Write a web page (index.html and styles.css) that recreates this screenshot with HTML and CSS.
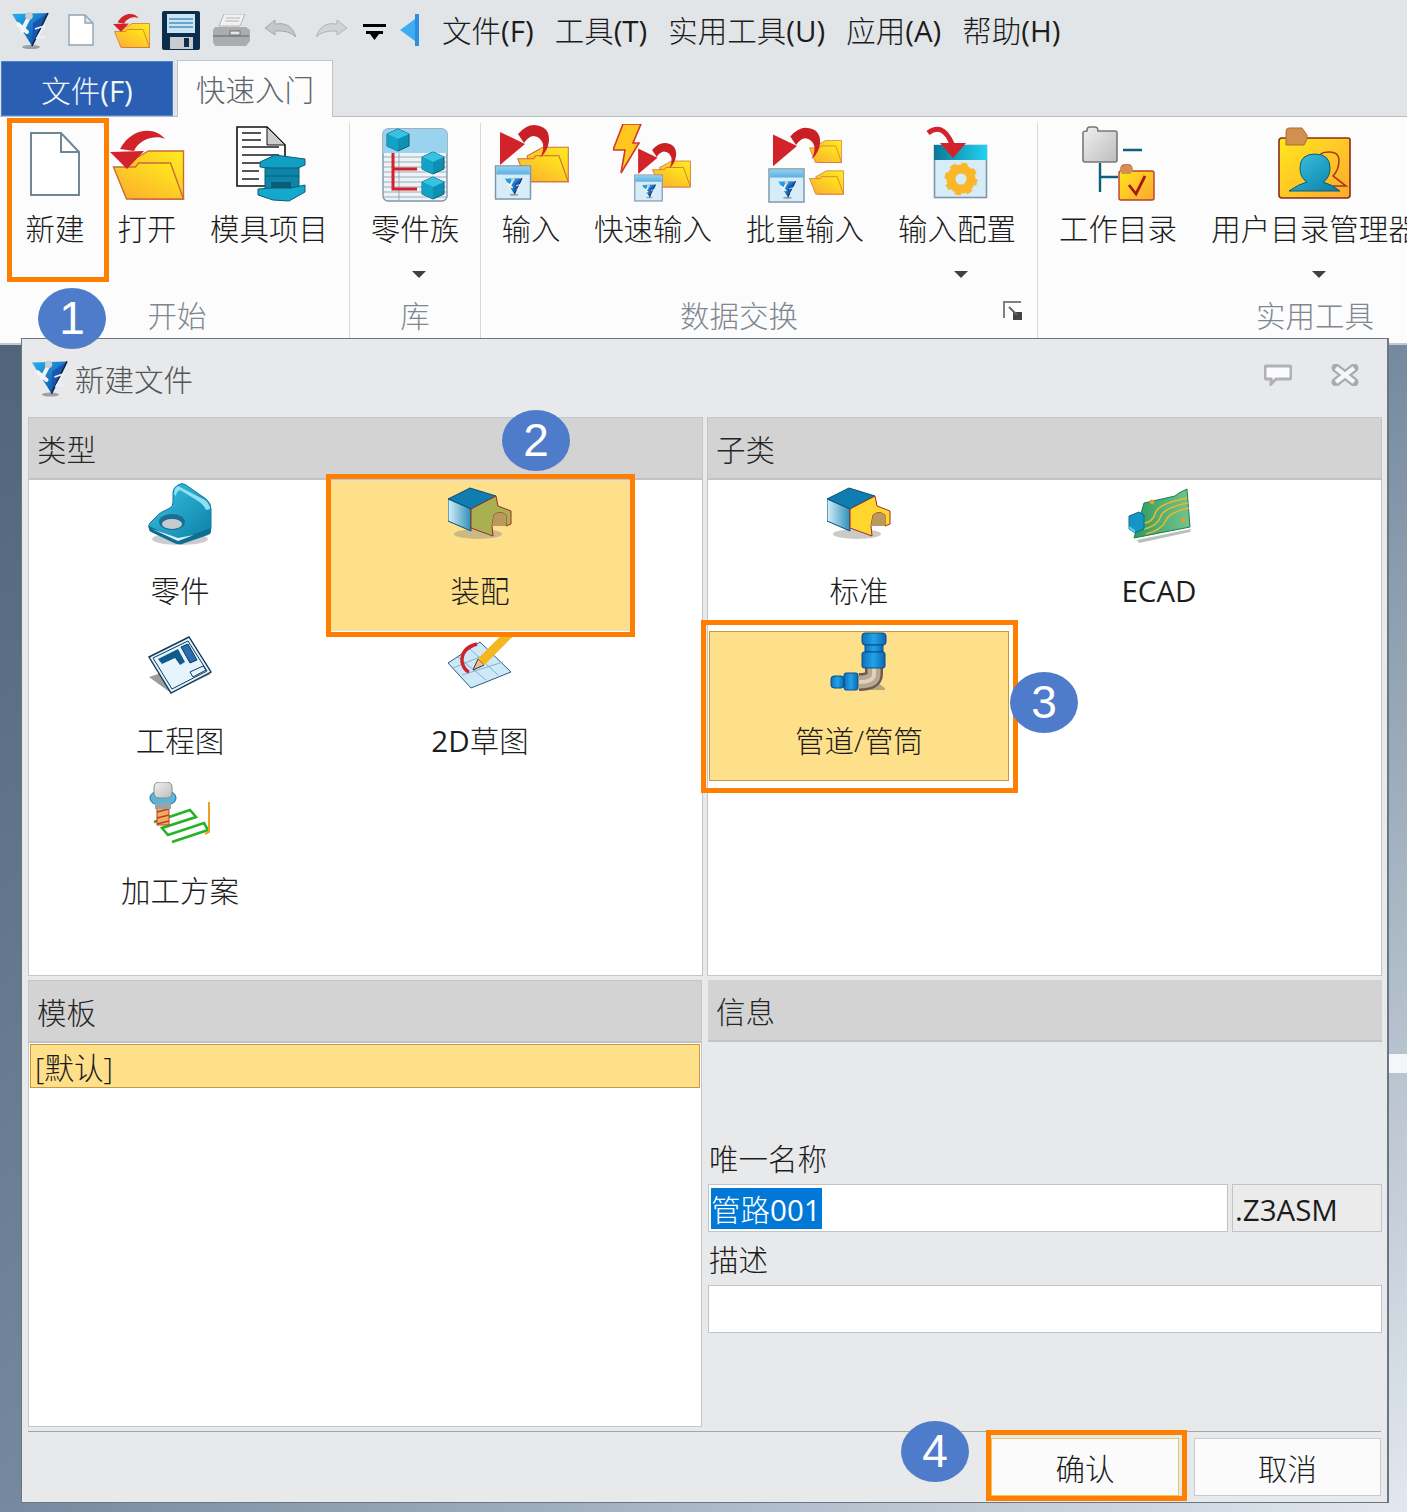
FILE: index.html
```html
<!DOCTYPE html>
<html lang="zh-CN">
<head>
	<meta charset="UTF-8"/>
	<title>新建文件</title>
	<link rel="stylesheet" href="styles.css">
</head>
<body>
<div class="page">
	<!-- Shared gradients and icon parts -->
	<svg class="defs" width="0" height="0">
		<defs>
			<linearGradient id="gYellow" x1="0" y1="1" x2="1" y2="0"><stop offset="0" stop-color="#fba92f"/><stop offset="1" stop-color="#ffee1c"/></linearGradient>
			<linearGradient id="gYellow2" x1="0" y1="0" x2="1" y2="1"><stop offset="0" stop-color="#ffe81c"/><stop offset="1" stop-color="#fba92f"/></linearGradient>
			<linearGradient id="gBlue" x1="0" y1="0" x2="1" y2="1"><stop offset="0" stop-color="#27b4ee"/><stop offset="1" stop-color="#0b3f9c"/></linearGradient>
			<linearGradient id="gTeal" x1="0" y1="0" x2="1" y2="1"><stop offset="0" stop-color="#3cc4e4"/><stop offset="1" stop-color="#0a7ea6"/></linearGradient>
			<linearGradient id="gFace" x1="0" y1="0" x2="1" y2="0"><stop offset="0" stop-color="#d4f0fa"/><stop offset="1" stop-color="#2f8fb8"/></linearGradient>
			<linearGradient id="gTitle" x1="0" y1="0" x2="1" y2="0"><stop offset="0" stop-color="#0b7896"/><stop offset="1" stop-color="#22d2f2"/></linearGradient>
			<linearGradient id="gWin" x1="0" y1="0" x2="0" y2="1"><stop offset="0" stop-color="#8fd0f2"/><stop offset="1" stop-color="#5fafe0"/></linearGradient>
			<linearGradient id="gGrey" x1="0" y1="0" x2="1" y2="1"><stop offset="0" stop-color="#f0f0f0"/><stop offset="1" stop-color="#bdbdbd"/></linearGradient>
			<linearGradient id="gPipe" x1="0" y1="0" x2="1" y2="0"><stop offset="0" stop-color="#0f6fc0"/><stop offset=".5" stop-color="#22a4e4"/><stop offset="1" stop-color="#0c66b4"/></linearGradient>
			<linearGradient id="gPcb" x1="0" y1="0" x2="1" y2="0"><stop offset="0" stop-color="#2d9c62"/><stop offset="1" stop-color="#74c48e"/></linearGradient>
		</defs>
		<symbol id="logo" viewBox="0 0 38 38">
			<ellipse cx="20" cy="36" rx="9" ry="2" fill="#9aa0a6"/>
			<polygon points="1,3 37,2 21,35" fill="url(#gBlue)"/>
			<polygon points="22,12 37,2 21,35" fill="#1a55b0"/>
			<path d="M37 2L21 35" stroke="#0e2240" stroke-width="1.6"/>
			<path d="M18 6L11 20M7 13L16 21" stroke="#f2f4f6" stroke-width="4" fill="none" stroke-linecap="round"/>
			<circle cx="18" cy="5" r="3.8" fill="#c8ced4"/>
			<path d="M24 18L33 15L26 27L34 26" stroke="#e8f4fc" stroke-width="1.8" fill="none"/>
		</symbol>
		<symbol id="folder" viewBox="0 0 72 50">
			<path d="M14 13 L29 5 L36 1 H71 V49 H20Z" fill="url(#gYellow)" stroke="#c96a3c" stroke-width="1.4"/>
			<path d="M1 17 H23 L26 13 H58 L71 49 H14Z" fill="url(#gYellow)" stroke="#c96a3c" stroke-width="1.4"/>
		</symbol>
		<symbol id="arrow" viewBox="0 0 56 42">
			<path d="M55 10C47-1 23-4 10 20L24 22C30 9 47 6 55 10Z M0 23L34 22L17 40Z" fill="#d2232a"/>
		</symbol>
		<symbol id="curl" viewBox="0 0 50 40">
			<path d="M0 7V40L25 19Z" fill="#d2232a"/>
			<path d="M18 9Q26 0 34 0Q50 1 49 16Q48 26 40 33Q44 26 43 19Q40 11 33 11Q28 12 24 18Z" fill="#c92026"/>
		</symbol>
		<symbol id="win" viewBox="0 0 38 36">
			<rect x="1" y="1" width="36" height="34" fill="#d6ecf9" stroke="#7d97aa" stroke-width="1.5"/>
			<rect x="1.8" y="1.8" width="34.4" height="8" fill="url(#gWin)"/>
			<use href="#logo" x="10" y="12" width="19" height="20"/>
		</symbol>
		<symbol id="cube" viewBox="0 0 24 24">
			<polygon points="12,1 23,6 23,18 12,23 1,18 1,6" fill="#0d90b4" stroke="#0a5c78" stroke-width="1"/>
			<polygon points="12,1 23,6 12,11 1,6" fill="#38c2e2"/>
			<polygon points="1,6 12,11 12,23 1,18" fill="#12a2c8"/>
		</symbol>
		<symbol id="block" viewBox="0 0 64 64">
			<ellipse cx="30" cy="52" rx="24" ry="5" fill="#8a8a80" opacity=".45"/>
			<polygon points="0,17 22,6 48,14 23,27" fill="#0f7db0" stroke="#0b4f78"/>
			<polygon points="0,17 23,27 23,49 0,39" fill="url(#gFace)" stroke="#0b4f78"/>
			<path d="M23 27 L48 14 L50 24 L63 29 V42 L58 44 V33 Q52 28 46 33 L44 44 L45 54 L23 46Z" fill="currentColor" stroke="#a02a2a" stroke-width="1"/>
			<path d="M46 33 Q52 28 58 33 V44 L44 44Z" fill="#b79a5c"/>
		</symbol>
	</svg>

	<!-- Quick access bar -->
	<div class="quick">
		<svg width="38" height="38"><use href="#logo"/></svg>
		<svg width="26" height="32" viewBox="0 0 26 32"><path d="M1 1H17L25 9V31H1Z M17 1V9H25" fill="#fff" stroke="#8fa5b4" stroke-width="1.4"/></svg>
		<svg width="37" height="35" viewBox="0 0 74 70"><use href="#folder" x="2" y="20" width="72" height="50"/><use href="#arrow" x="0" y="0" width="52" height="40"/></svg>
		<svg width="38" height="39" viewBox="0 0 38 39">
			<rect x="0" y="0" width="38" height="39" rx="2" fill="#0b2e4c"/>
			<rect x="5" y="3" width="28" height="19" fill="#c9e4f4"/>
			<path d="M7 8H31M7 12H31M7 16H31" stroke="#4d90b8" stroke-width="1.4"/>
			<rect x="8" y="26" width="23" height="12" fill="#c8ccd0"/>
			<rect x="22" y="27" width="5" height="9" fill="#0b2e4c"/>
		</svg>
		<svg width="37" height="32" viewBox="0 0 37 32">
			<polygon points="11,0 32,0 27,12 6,12" fill="#f1f1f1" stroke="#b5b5b5"/>
			<path d="M13 4H27M12 7H26" stroke="#b5b5b5"/>
			<path d="M2 13H33L37 16V27L33 32H2L0 28V16Z" fill="#a9adb0"/>
			<path d="M0 22H36" stroke="#797d80" stroke-width="1.4"/>
			<rect x="17" y="17" width="10" height="4" fill="#e5e5e5" stroke="#6f7375"/>
		</svg>
		<svg width="31" height="17" viewBox="0 0 31 17"><path d="M0 8L10 0V4Q26 1 31 17Q24 10 10 11V15Z" fill="#c4c8ca" stroke="#a4a8aa"/></svg>
		<svg width="31" height="17" viewBox="0 0 31 17"><path d="M31 8L21 0V4Q5 1 0 17Q7 10 21 11V15Z" fill="#d0d4d6" stroke="#b0b4b6"/></svg>
		<svg width="23" height="16" viewBox="0 0 23 16"><path d="M0 0H23V3H0Z M3 7H20V10H16L11.5 16L7 10H3Z" fill="#000"/></svg>
		<svg width="20" height="32" viewBox="0 0 20 32"><polygon points="0,16 15,5 15,27" fill="#3fabf2"/><rect x="15" y="0" width="4" height="32" fill="#2c8ee0"/></svg>
		<nav class="menu">
			<span>文件<i class="lat">(F)</i></span>
			<span>工具<i class="lat">(T)</i></span>
			<span>实用工具<i class="lat">(U)</i></span>
			<span>应用<i class="lat">(A)</i></span>
			<span>帮助<i class="lat">(H)</i></span>
		</nav>
	</div>

	<!-- Ribbon tabs -->
	<div class="tabs">
		<div class="tab tab-file">文件<i class="lat">(F)</i></div>
		<div class="tab tab-on">快速入门</div>
	</div>

	<!-- Ribbon -->
	<div class="ribbon">
		<section class="group g-start">
			<div class="btns">
				<div class="rb w92">
					<svg class="ic" viewBox="0 0 80 80"><path d="M16 9H46L64 28V71H16Z" fill="#fff" stroke="#6f8794" stroke-width="2"/><path d="M46 9V28H64" fill="none" stroke="#6f8794" stroke-width="2"/></svg>
					<span>新建</span>
				</div>
				<div class="rb w92">
					<svg class="ic" viewBox="0 0 80 80"><use href="#folder" x="5" y="26" width="73" height="50"/><use href="#arrow" x="3" y="5" width="56" height="42"/></svg>
					<span>打开</span>
				</div>
				<div class="rb w152">
					<svg class="ic" viewBox="0 0 80 80">
						<path d="M8 3H38L56 21V62H8Z" fill="#fff" stroke="#111" stroke-width="1.6"/>
						<path d="M38 3V21H56Z" fill="#ccc" stroke="#111"/>
						<path d="M13 9H32M13 16H32M13 23H50M13 31H50M13 39H34M13 47H30M13 55H30" stroke="#555" stroke-width="2"/>
						<polygon points="31,38 46,31 76,35 76,41 62,47 31,43" fill="#10a0c4" stroke="#0a5c78"/>
						<polygon points="36,44 70,44 70,66 36,66" fill="#0c85a8" stroke="#0a5c78"/>
						<polygon points="42,58 62,58 62,64 42,64" fill="#0a5c78"/>
						<polygon points="29,65 42,64 62,64 76,61 76,68 60,77 44,76 29,71" fill="#13a8cc" stroke="#0a5c78"/>
						<path d="M36 52H70" stroke="#0a5c78"/>
					</svg>
					<span>模具项目</span>
				</div>
			</div>
			<div class="group-label">开始</div>
		</section>
		<section class="group g-lib">
			<div class="btns">
				<div class="rb wfull">
					<svg class="ic" viewBox="0 0 80 80">
						<rect x="8" y="5" width="64" height="72" rx="5" fill="#eef3f6" stroke="#7d97aa" stroke-width="1.4"/>
						<path d="M13 5H67Q72 5 72 10V29H8V10Q8 5 13 5Z" fill="#9bd3ef"/>
						<path d="M8 33H72M8 38H72M8 43H72M8 48H72M8 53H72M8 58H72M8 63H72M8 68H72M8 73H72M24 29V77" stroke="#8ea4b4" stroke-width=".9"/>
						<path d="M18 29V65H42M18 45H42" fill="none" stroke="#d8202c" stroke-width="3"/>
						<use href="#cube" x="11" y="4" width="24" height="24"/>
						<use href="#cube" x="46" y="27" width="24" height="24"/>
						<use href="#cube" x="46" y="52" width="24" height="24"/>
					</svg>
					<span>零件族</span>
					<i class="caret"></i>
				</div>
			</div>
			<div class="group-label">库</div>
		</section>
		<section class="group g-data">
			<div class="btns">
				<div class="rb w100">
					<svg class="ic" viewBox="0 0 80 80">
						<use href="#folder" x="26" y="18" width="52" height="45"/>
						<use href="#curl" x="9" y="1" width="50" height="40"/>
						<use href="#win" x="3" y="41" width="38" height="35"/>
					</svg>
					<span>输入</span>
				</div>
				<div class="rb w144">
					<svg class="ic" viewBox="0 0 80 80">
						<polygon points="10,0 28,0 20,19 26,19 8,49 12,26 0,26" fill="#ffc81e" stroke="#d3382a" stroke-width="1.6"/>
						<use href="#folder" x="39" y="33" width="39" height="34"/>
						<use href="#curl" x="25" y="19" width="39" height="31"/>
						<use href="#win" x="21" y="50" width="29" height="28"/>
					</svg>
					<span>快速输入</span>
				</div>
				<div class="rb w160">
					<svg class="ic" viewBox="0 0 80 80">
						<use href="#folder" x="44" y="13" width="33" height="29"/>
						<use href="#folder" x="44" y="44" width="35" height="29"/>
						<use href="#curl" x="8" y="3" width="48" height="40"/>
						<use href="#win" x="3" y="44" width="37" height="35"/>
					</svg>
					<span>批量输入</span>
				</div>
				<div class="rb w144">
					<svg class="ic" viewBox="0 0 80 80">
						<rect x="17.5" y="21.5" width="52" height="52" fill="#d6ecf9" stroke="#7d97aa" stroke-width="1.6"/>
						<rect x="17" y="21" width="53" height="15" fill="url(#gTitle)"/>
						<path d="M11 9Q26-2 35 20" fill="none" stroke="#d2232a" stroke-width="5"/>
						<polygon points="23,19 49,19 36,34" fill="#d2232a"/>
						<circle cx="44" cy="55" r="10" fill="none" stroke="#fbb72a" stroke-width="9"/>
						<circle cx="44" cy="55" r="14.5" fill="none" stroke="#fbb72a" stroke-width="4" stroke-dasharray="6 5.4"/>
					</svg>
					<span>输入配置</span>
					<i class="caret"></i>
				</div>
			</div>
			<div class="group-label">数据交换</div>
			<svg class="launcher" width="20" height="20" viewBox="0 0 20 20"><path d="M1 17V1H18" fill="none" stroke="#808080" stroke-width="2"/><rect x="10" y="11" width="9" height="8" fill="#444"/><path d="M6 6L14 14" stroke="#666" stroke-width="2"/></svg>
		</section>
		<section class="group g-util">
			<div class="btns">
				<div class="rb w160">
					<svg class="ic" viewBox="0 0 80 80">
						<path d="M5 9Q5 7 9 7V6Q9 3 12 3H17Q20 3 20 7H37Q39 7 39 9V36Q39 38 37 38H7Q5 38 5 36Z" fill="url(#gGrey)" stroke="#777" stroke-width="1.6"/>
						<path d="M45 26H64M22 39V68M22 53H40" stroke="#0f5f80" stroke-width="2.4" fill="none"/>
						<path d="M41 49Q41 47 43 47V45Q43 41 47 41H51Q54 41 54 47H74Q76 47 76 49V74Q76 76 74 76H43Q41 76 41 74Z" fill="url(#gYellow2)" stroke="#b8402c" stroke-width="1.4"/>
						<path d="M42 47Q42 41 47 41H51Q55 41 55 47L52 50H44Z" fill="#d09050"/>
						<path d="M51 61L58 70L67 52" fill="none" stroke="#a81818" stroke-width="2.8"/>
					</svg>
					<span>工作目录</span>
				</div>
				<div class="rb w233">
					<svg class="ic" viewBox="0 0 80 80">
						<path d="M4 17Q4 14 7 14H73Q75 14 75 16V71Q75 74 72 74H7Q4 74 4 71Z" fill="url(#gYellow2)" stroke="#8c2a18" stroke-width="1.6"/>
						<path d="M11 8Q11 4 14 4H27L32 11V15L29 21H11Z" fill="#d09050" stroke="#b06a30"/>
						<path d="M44 48V34Q44 28 54 28Q64 28 64 36Q64 46 58 52L71 62H46Z" fill="none" stroke="#a83a20" stroke-width="1.6"/>
						<path d="M40 30Q55 30 55 44Q55 54 48 58Q56 60 65 67H14Q24 60 32 58Q25 54 25 44Q25 30 40 30Z" fill="url(#gTeal)" stroke="#0a5c78"/>
					</svg>
					<span>用户目录管理器</span>
					<i class="caret"></i>
				</div>
			</div>
			<div class="group-label">实用工具</div>
		</section>
	</div>

	<i class="desk-strip"></i>

	<!-- New file dialog -->
	<div class="dialog">
		<div class="dlg-title">
			<svg width="37" height="38"><use href="#logo"/></svg>
			<span class="dlg-name">新建文件</span>
			<svg class="dlg-chat" width="28" height="22" viewBox="0 0 28 22"><path d="M3 2H25Q27 2 27 4V13Q27 15 25 15H12L7 20V15H3Q1 15 1 13V4Q1 2 3 2Z" fill="#fbfbfb" stroke="#aeb2b6" stroke-width="3"/></svg>
			<svg class="dlg-close" width="28" height="22" viewBox="0 0 28 22"><path d="M5 4L23 18M23 4L5 18" stroke="#a8acb0" stroke-width="9" stroke-linecap="round"/><path d="M5 4L23 18M23 4L5 18" stroke="#f6f6f6" stroke-width="4.5"/></svg>
		</div>
		<div class="panels">
			<section class="panel">
				<h2>类型</h2>
				<div class="items">
					<div class="item">
						<svg class="big" viewBox="0 0 64 64">
							<ellipse cx="32" cy="57" rx="28" ry="6" fill="#9a9a9a" opacity=".5"/>
							<path d="M30 3Q34 0 38 3L58 17Q63 21 63 27V46Q63 49 60 50L34 60Q30 61 26 59L3 48Q-1 45 2 41L8 35Q10 32 14 30L22 26Q25 24 25 20V10Q25 6 30 3Z" fill="url(#gTeal)" stroke="#0b7ea4"/>
							<path d="M30 4L57 18Q62 22 62 27L58 28Q56 23 50 19L32 8Q28 10 28 14L26 12Q26 6 30 4Z" fill="#8fe0f4"/>
							<path d="M1 44L30 58L63 46V50Q63 52 60 53L34 62Q30 63 26 61L3 50Q0 48 1 44Z" fill="#0e6f94"/>
							<path d="M4 47L30 59L46 53L30 56Z" fill="#d8f4fb"/>
							<ellipse cx="24" cy="40" rx="13" ry="8" fill="#1b6d92"/>
							<ellipse cx="24" cy="42" rx="10" ry="5" fill="#c4ccd0"/>
						</svg>
						<span>零件</span>
					</div>
					<div class="item on">
						<svg class="big olive"><use href="#block"/></svg>
						<span>装配</span>
					</div>
					<div class="item">
						<svg class="big" viewBox="0 0 64 64">
							<polygon points="1,45 23,61 63,42 40,32" fill="#9c9c9c"/>
							<polygon points="1,25 41,5 63,40 23,61" fill="#e6f5fd" stroke="#0e3a5c" stroke-width="1.4"/>
							<polygon points="5,26 40,9 59,39 24,57" fill="none" stroke="#0e3a5c"/>
							<path d="M10 27L30 17L37 30L32 33L27 26L14 32Z" fill="#115b8c"/>
							<polygon points="33,15 40,12 49,28 42,31" fill="#2a6cb0" stroke="#0e3a5c"/>
							<polygon points="42,40 55,34 58,38 45,45" fill="none" stroke="#0e3a5c"/>
						</svg>
						<span>工程图</span>
					</div>
					<div class="item">
						<svg class="big" viewBox="0 0 64 64">
							<polygon points="0,31 32,10 63,40 23,56" fill="#cfe8f8" stroke="#2a5c80"/>
							<path d="M10 25L38 48M22 17L50 43M5 36L44 20M14 43L55 30" stroke="#7fb2d4"/>
							<path d="M29 12Q13 16 14 30Q16 38 21 40" fill="none" stroke="#d0202a" stroke-width="3.4"/>
							<polygon points="25,38 30,27 36,33" fill="#eac28a" stroke="#333"/>
							<path d="M33 30L63 0" stroke="#f4b81e" stroke-width="9"/>
						</svg>
						<span><i class="lat">2D</i>草图</span>
					</div>
					<div class="item">
						<svg class="big" viewBox="0 0 64 64">
							<path d="M6 40L42 28L48 35L14 46L20 53L56 41L60 48L24 60" fill="none" stroke="#22b422" stroke-width="2.6"/>
							<path d="M61 20V50L57 52" fill="none" stroke="#f0a020" stroke-width="2"/>
							<rect x="9" y="25" width="12" height="18" fill="#eeb060" stroke="#c83a20"/>
							<path d="M9 30L21 27M9 36L21 33M9 42L21 39" stroke="#c83a20" stroke-width="1.6"/>
							<rect x="2" y="10" width="26" height="12" rx="6" fill="#5ab4d8" stroke="#20708f"/>
							<rect x="6" y="0" width="18" height="16" rx="5" fill="url(#gGrey)" stroke="#888"/>
							<rect x="7" y="21" width="16" height="6" fill="#9aa4a8"/>
						</svg>
						<span>加工方案</span>
					</div>
				</div>
			</section>
			<section class="panel">
				<h2>子类</h2>
				<div class="items">
					<div class="item">
						<svg class="big yellow"><use href="#block"/></svg>
						<span>标准</span>
					</div>
					<div class="item">
						<svg class="big" viewBox="0 0 64 64">
							<polygon points="10,58 64,47 63,50 12,61" fill="#b8c0b8"/>
							<polygon points="60,7 63,45 7,56 17,21 48,14 52,11" fill="url(#gPcb)" stroke="#1f7c4c"/>
							<path d="M15 42Q26 40 28 32Q30 22 60 16M17 47Q30 44 33 36Q35 26 61 21M19 52Q34 48 38 40Q42 30 62 26" fill="none" stroke="#f2b626" stroke-width="1.6"/>
							<circle cx="25" cy="20" r="2.4" fill="#e0a030"/><circle cx="56" cy="38" r="2.4" fill="#e0a030"/>
							<polygon points="2,34 12,30 17,33 17,47 8,51 2,47" fill="#1496c4" stroke="#0a6c90"/>
							<polygon points="2,44 8,48 8,51 2,47" fill="#5cc8e8"/>
						</svg>
						<span><i class="lat">ECAD</i></span>
					</div>
					<div class="item on on-pipe">
						<svg class="big" viewBox="0 0 64 64">
							<path d="M4 58H36L44 46L58 56V58Z" fill="#94946a" opacity=".7"/>
							<path d="M47 36V42Q47 50 32 50" fill="none" stroke="#6a5a50" stroke-width="18"/>
							<path d="M47 36V42Q47 50 32 50" fill="none" stroke="#b8a890" stroke-width="13"/>
							<path d="M47 36V42Q47 50 32 50" fill="none" stroke="#e0d0c0" stroke-width="4"/>
							<rect x="35" y="1" width="24" height="12" rx="3" fill="url(#gPipe)" stroke="#0a4c8c"/>
							<rect x="38" y="13" width="18" height="7" fill="url(#gPipe)" stroke="#0a4c8c"/>
							<rect x="35" y="20" width="23" height="16" rx="2" fill="url(#gPipe)" stroke="#0a4c8c"/>
							<rect x="17" y="41" width="14" height="17" rx="2" fill="url(#gPipe)" stroke="#0a4c8c"/>
							<rect x="4" y="44" width="13" height="12" rx="3" fill="url(#gPipe)" stroke="#0a4c8c"/>
						</svg>
						<span>管道/管筒</span>
					</div>
				</div>
			</section>
			<section class="panel p-template">
				<h2>模板</h2>
				<div class="tpl-row">[默认]</div>
			</section>
			<section class="panel p-info">
				<h2>信息</h2>
				<div class="info-body">
					<div class="f-label">唯一名称</div>
					<div class="f-row">
						<div class="field f-name"><span class="sel">管路<i class="lat">001</i></span></div>
						<div class="field f-ext"><i class="lat">.Z3ASM</i></div>
					</div>
					<div class="f-label f-second">描述</div>
					<div class="field f-desc"></div>
				</div>
			</section>
		</div>
		<div class="dlg-foot">
			<div class="dbtn d-ok">确认</div>
			<div class="dbtn d-cancel">取消</div>
		</div>
	</div>

	<!-- Tutorial marks drawn over the screenshot -->
	<i class="mark m1"></i>
	<i class="mark m2"></i>
	<i class="mark m3"></i>
	<i class="mark m4"></i>
	<b class="badge b1">1</b>
	<b class="badge b2">2</b>
	<b class="badge b3">3</b>
	<b class="badge b4">4</b>
</div>
</body>
</html>
```

FILE: styles.css
```css
/* Base */
* {
	box-sizing: border-box;
}
body {
	margin: 0;
	font-family: "Open Sans", "Noto Sans CJK SC", sans-serif;
	font-size: 29.5px;
	font-weight: 300;
	color: #1c1c1c;
}
/* Latin runs stay regular, the CJK font looks right in light */
.lat {
	font-style: normal;
	font-weight: 400;
}
.page {
	position: relative;
	width: 1407px;
	height: 1512px;
	overflow: hidden;
	background: linear-gradient(140deg, #506579 13%, #74899e 56%, #e2e8ef 100%);
}
.defs {
	display: block;
}

/* Quick access bar */
.quick {
	display: flex;
	align-items: center;
	height: 60px;
	padding-left: 11px;
	background-color: #e2e5e8;
}
.quick svg {
	flex: none;
}
.quick svg:nth-child(2) { margin-left: 19px; }
.quick svg:nth-child(3) { margin-left: 19px; }
.quick svg:nth-child(4) { margin-left: 12px; }
.quick svg:nth-child(5) { margin-left: 13px; }
.quick svg:nth-child(6) { margin-left: 15px; margin-top: -3px; }
.quick svg:nth-child(7) { margin-left: 20px; margin-top: -3px; }
.quick svg:nth-child(8) { margin-left: 16px; margin-top: 4px; }
.quick svg:nth-child(9) { margin-left: 14px; }
.menu {
	display: flex;
	gap: 21px;
	margin-left: 22px;
	line-height: 40px;
	margin-top: 1px;
}

/* Tabs */
.tabs {
	display: flex;
	gap: 4px;
	height: 56px;
	padding-left: 1px;
	background-color: #e2e5e8;
}
.tab {
	text-align: center;
	line-height: 58px;
}
.tab-file {
	width: 172px;
	height: 55px;
	margin-top: 1px;
	background-color: #2b5fb3;
	border: 1px solid #4a80d0;
	color: #f2f5fa;
}
.tab-on {
	position: relative;
	z-index: 1;
	width: 156px;
	height: 57px;
	background-color: #fcfcfc;
	border: 1px solid #bfc4ca;
	border-bottom: none;
	color: #5d646c;
}

/* Ribbon */
.ribbon {
	display: flex;
	height: 229px;
	overflow: hidden;
	background-color: #fcfcfc;
	border-top: 1px solid #b8bdc3;
	border-bottom: 2px solid #c4c8cc;
}
.group {
	position: relative;
	flex: none;
	height: 215px;
	margin-top: 6px;
	padding-top: 1px;
	border-right: 1px solid #d8d8d8;
}
.g-start { width: 350px; padding-left: 9px; }
.g-lib { width: 131px; }
.g-data { width: 557px; }
.g-util { width: 554px; border-right: none; }
.btns {
	display: flex;
	height: 174px;
}
.rb {
	display: flex;
	flex: none;
	flex-direction: column;
	align-items: center;
	white-space: nowrap;
}
.rb span {
	line-height: 50px;
}
.w92 { width: 92px; }
.w100 { width: 100px; }
.w144 { width: 144px; }
.w152 { width: 152px; }
.w160 { width: 160px; }
.w233 { width: 233px; }
.wfull { width: 130px; }
.ic {
	flex: none;
	width: 80px;
	height: 80px;
}
.caret {
	width: 0;
	height: 0;
	margin-top: 17px;
	margin-left: 8px;
	border-left: 7px solid transparent;
	border-right: 7px solid transparent;
	border-top: 7px solid #404040;
}
.group-label {
	line-height: 36px;
	text-align: center;
	color: #7f8790;
}
.g-start .group-label {
	padding-right: 4px;
}
.g-data .group-label {
	padding-right: 40px;
}
.launcher {
	position: absolute;
	left: 522px;
	top: 178px;
}
.desk-strip {
	position: absolute;
	left: 1389px;
	top: 1054px;
	width: 18px;
	height: 19px;
	background-color: #f4f6f9;
}

/* Dialog */
.dialog {
	position: absolute;
	left: 21px;
	top: 338px;
	width: 1368px;
	height: 1165px;
	padding: 0 6px;
	background-color: #e8e9eb;
	border: 1px solid #6d7680;
	border-right-width: 2px;
}
.dlg-title {
	display: flex;
	align-items: center;
	height: 78px;
	padding-left: 3px;
}
.dlg-name {
	margin-left: 7px;
	color: #555;
}
.dlg-chat {
	margin-left: auto;
	margin-top: -6px;
}
.dlg-close {
	margin-left: 39px;
	margin-right: 22px;
	margin-top: -6px;
}
.panels {
	display: grid;
	grid-template-columns: 675px 675px;
	grid-template-rows: 559px 447px;
	gap: 4px;
}
.panel {
	background-color: #fff;
	border: 1px solid #c4c6ca;
}
.panel h2 {
	height: 62px;
	margin: 0;
	padding-left: 8px;
	font-size: 29.5px;
	font-weight: 300;
	line-height: 64px;
	background-color: #d3d3d3;
	border-bottom: 2px solid #c2c3c6;
	color: #262626;
}
.items {
	display: grid;
	grid-template-columns: 300px 300px;
	grid-auto-rows: 150px;
	padding-left: 1px;
}
.item {
	display: flex;
	flex-direction: column;
	align-items: center;
	padding-top: 2px;
}
.item span {
	margin-top: 25px;
	line-height: 40px;
}
.item.on {
	height: 151px;
	padding-top: 1px;
	background-color: #ffe08a;
	border: 1px solid #e8e0c8;
}
.item.on-pipe {
	height: 150px;
	margin-top: 1px;
	padding-top: 0;
	border-color: #c99a3c;
}
.big {
	flex: none;
	width: 64px;
	height: 64px;
}
.olive { color: #a8b050; }
.yellow { color: #ffd62e; }
.p-template {
	margin-right: 1px;
}
.tpl-row {
	height: 44px;
	margin: 1px 1px 0;
	padding-left: 4px;
	line-height: 45px;
	background-color: #ffe08a;
	border: 1px solid #c89a40;
}
.p-info {
	margin-left: 1px;
	background-color: transparent;
	border: none;
}
.info-body {
	padding: 96px 0 0;
}
.f-label {
	padding-left: 1px;
	line-height: 42px;
}
.f-second {
	margin-top: 7px;
}
.f-row {
	display: flex;
	gap: 4px;
}
.field {
	height: 48px;
	margin-top: 4px;
	background-color: #fff;
	border: 1px solid #c0c3c8;
	line-height: 50px;
}
.f-name {
	flex: 1;
	padding: 3px 0 0 2px;
}
.f-ext {
	width: 150px;
	padding-left: 2px;
	background-color: #ebebeb;
}
.sel {
	display: inline-block;
	height: 41px;
	padding-right: 1px;
	white-space: nowrap;
	line-height: 44px;
	background-color: #0078d7;
	color: #fff;
	vertical-align: top;
}
.dlg-foot {
	display: flex;
	justify-content: flex-end;
	gap: 15px;
	height: 65px;
	margin-top: 4px;
	padding-top: 6px;
	border-top: 1px solid #a4a6a8;
}
.dbtn {
	height: 58px;
	text-align: center;
	line-height: 60px;
	background-color: #fbfbfb;
	border: 1px solid #c8cacc;
}
.d-ok {
	width: 188px;
	border-color: #e6c860;
}
.d-cancel {
	width: 187px;
}

/* Orange callout boxes */
.mark {
	position: absolute;
	border: 5px solid #ff8000;
}
.m1 { left: 7px; top: 118px; width: 102px; height: 164px; }
.m2 { left: 326px; top: 474px; width: 309px; height: 163px; }
.m3 { left: 701px; top: 620px; width: 317px; height: 173px; }
.m4 { left: 986px; top: 1430px; width: 201px; height: 71px; }

/* Numbered circles */
.badge {
	position: absolute;
	width: 68px;
	height: 61px;
	border-radius: 50%;
	background-color: #4f7cca;
	color: #fff;
	font-family: "Liberation Sans", sans-serif;
	font-size: 46px;
	font-weight: 400;
	line-height: 61px;
	text-align: center;
}
.b1 { left: 38px; top: 288px; }
.b2 { left: 502px; top: 410px; }
.b3 { left: 1010px; top: 672px; }
.b4 { left: 901px; top: 1421px; }
```
